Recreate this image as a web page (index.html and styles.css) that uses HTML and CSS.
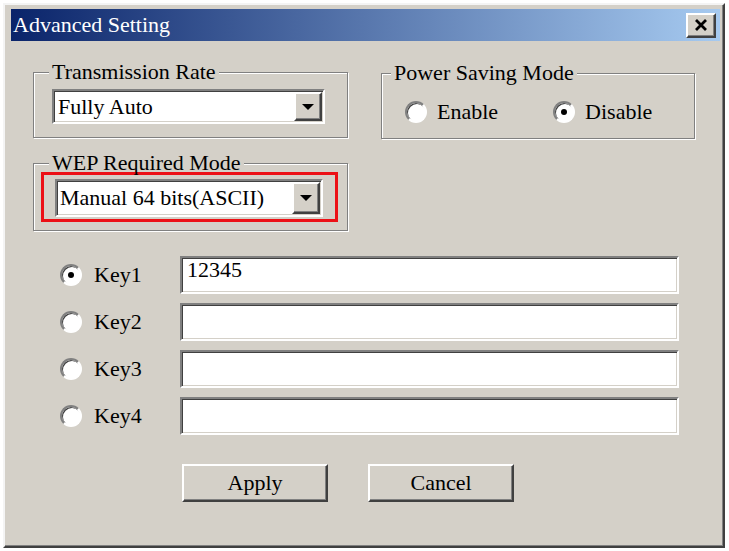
FILE: index.html
```html
<!DOCTYPE html>
<html lang="en">
<head>
  <meta charset="UTF-8" />
  <title>Advanced Setting</title>
  <link rel="stylesheet" href="styles.css">
</head>
<body>
  <div class="window">
    <!-- Title bar -->
    <div class="titlebar">
      <span class="title">Advanced Setting</span>
      <div class="close">
        <svg width="14" height="12" viewBox="0 0 14 12">
          <path d="M2 1 L12 11 M12 1 L2 11" stroke="#000" stroke-width="2.8" />
        </svg>
      </div>
    </div>

    <div class="content">
      <div class="top">
        <div class="left-col">
          <!-- Transmission Rate -->
          <fieldset class="group rate">
            <legend>Transmission Rate</legend>
            <div class="combo">
              <span class="combo-text">Fully Auto</span>
              <div class="drop"><span class="arrow"></span></div>
            </div>
          </fieldset>

          <!-- WEP -->
          <fieldset class="group wep">
            <legend>WEP Required Mode</legend>
            <div class="highlight">
              <div class="combo tall">
                <span class="combo-text">Manual 64 bits(ASCII)</span>
                <div class="drop"><span class="arrow"></span></div>
              </div>
            </div>
          </fieldset>
        </div>

        <!-- Power Saving Mode -->
        <fieldset class="group power">
          <legend>Power Saving Mode</legend>
          <div class="radio-row">
            <label class="opt"><span class="radio"></span>Enable</label>
            <label class="opt second"><span class="radio checked"></span>Disable</label>
          </div>
        </fieldset>
      </div>

      <!-- Keys -->
      <div class="keys">
        <label class="opt key"><span class="radio checked"></span>Key1</label>
        <div class="field">12345</div>
        <label class="opt key"><span class="radio"></span>Key2</label>
        <div class="field"></div>
        <label class="opt key"><span class="radio"></span>Key3</label>
        <div class="field"></div>
        <label class="opt key"><span class="radio"></span>Key4</label>
        <div class="field"></div>
      </div>

      <div class="actions">
        <div class="btn">Apply</div>
        <div class="btn">Cancel</div>
      </div>
    </div>
  </div>
</body>
</html>
```

FILE: styles.css
```css
* {
  box-sizing: border-box;
}
body {
  margin: 0;
  background: #fff;
  font-family: 'Liberation Serif', 'Times New Roman', serif;
  font-size: 22px;
  color: #000;
}
.window {
  margin: 3px 0 0 3px;
  width: 722px;
  height: 545px;
  background: #d4d0c8;
  border: 2px solid;
  border-color: #f4f4f4 #404040 #404040 #f4f4f4;
  box-shadow: inset -1px -1px #808080;
  padding: 4px 3px 0 6px;
  display: flex;
  flex-direction: column;
}
.titlebar {
  height: 32px;
  flex-shrink: 0;
  background: linear-gradient(to right, #0a246a, #a6caf0);
  display: flex;
  align-items: center;
  padding-left: 2px;
}
.title {
  color: #fff;
  line-height: 32px;
}
.close {
  margin-left: auto;
  margin-right: 4px;
  width: 30px;
  height: 25px;
  background: #d4d0c8;
  border: 2px solid;
  border-color: #fff #404040 #404040 #fff;
  box-shadow: inset -1px -1px #808080;
  display: flex;
  align-items: center;
  justify-content: center;
}
.content {
  flex: 1;
  padding: 21px 0 0 22px;
}
.top {
  display: flex;
  gap: 33px;
  align-items: flex-start;
}
.left-col {
  width: 315px;
}

/* Group boxes */
.group {
  margin: 0;
  border: 1px solid #808080;
  box-shadow: 1px 1px #fff, inset 1px 1px #fff;
  padding: 7px 18px 13px;
}
.group legend {
  padding: 0 3px;
  margin-left: -3px;
  line-height: 20px;
  background: #d4d0c8;
}
.wep {
  margin-top: 15px;
  padding: 0 9px 8px 7px;
}
.wep legend {
  margin-left: 8px;
}
.power {
  width: 314px;
  margin-top: 1px;
  padding: 18px 12px 15px;
}

/* Combo boxes */
.combo {
  width: 273px;
  height: 35px;
  display: flex;
  align-items: center;
  background: #fff;
  border: 2px solid;
  border-color: #808080 #fff #fff #808080;
  box-shadow: inset 1px 1px #404040, inset -1px -1px #d4d0c8;
  padding: 0 1px 0 4px;
}
.combo.tall {
  width: 268px;
  height: 38px;
  padding-left: 3px;
}
.combo-text {
  white-space: nowrap;
}
.drop {
  margin-left: auto;
  width: 28px;
  height: 29px;
  background: #d4d0c8;
  border: 2px solid;
  border-color: #fff #404040 #404040 #fff;
  box-shadow: inset -1px -1px #808080;
  display: flex;
  align-items: center;
  justify-content: center;
}
.tall .drop {
  height: 32px;
}
.arrow {
  width: 0;
  height: 0;
  border-left: 6px solid transparent;
  border-right: 6px solid transparent;
  border-top: 6px solid #000;
}
.highlight {
  width: 297px;
  margin-top: -1px;
  border: 3px solid #ec1016;
  padding: 4px 12px 2px 11px;
}

/* Radios */
.radio-row {
  display: flex;
  height: 22px;
  align-items: center;
  padding-left: 11px;
}
.opt {
  display: inline-flex;
  align-items: center;
  white-space: nowrap;
}
.opt.second {
  margin-left: 55px;
}
.radio {
  width: 22px;
  height: 22px;
  border-radius: 50%;
  background: #fff;
  border: 2px solid;
  border-color: #808080 #fff #fff #808080;
  box-shadow: inset 1px 1px #404040;
  margin-right: 10px;
  display: flex;
  align-items: center;
  justify-content: center;
}
.radio.checked::after {
  content: "";
  width: 6px;
  height: 6px;
  border-radius: 50%;
  background: #000;
}

/* WEP keys */
.keys {
  margin-top: 25px;
  padding-left: 27px;
  display: grid;
  grid-template-columns: 120px 499px;
  row-gap: 9px;
}
.key .radio {
  margin-right: 12px;
}
.field {
  height: 38px;
  background: #fff;
  border: 2px solid;
  border-color: #808080 #fff #fff #808080;
  box-shadow: inset 1px 1px #404040, inset -1px -1px #d4d0c8;
  padding: 1px 5px;
  line-height: 22px;
}

/* Buttons */
.actions {
  margin-top: 29px;
  padding-left: 149px;
  display: flex;
  gap: 40px;
}
.btn {
  width: 146px;
  height: 38px;
  background: #d4d0c8;
  border: 2px solid;
  border-color: #fff #404040 #404040 #fff;
  box-shadow: inset -1px -1px #808080;
  display: flex;
  align-items: center;
  justify-content: center;
}
```
